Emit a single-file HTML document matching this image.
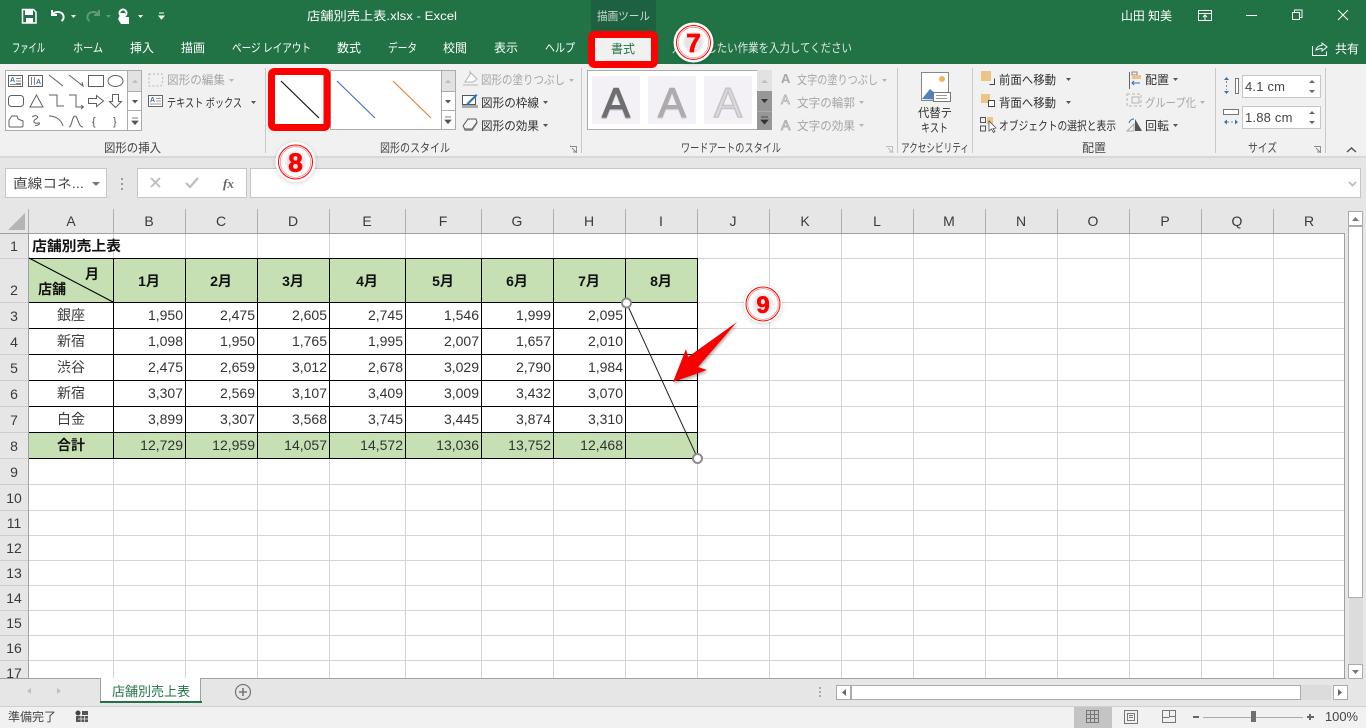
<!DOCTYPE html>
<html lang="ja"><head><meta charset="utf-8"><title>店舗別売上表.xlsx - Excel</title>
<style>
html,body{margin:0;padding:0;width:1366px;height:728px;overflow:hidden;background:#fff}
svg{display:block;font-family:"Liberation Sans","Noto Sans CJK JP",sans-serif;white-space:pre}
.t{font-size:12px;fill:#303030}
.g{font-size:12px;fill:#a6a6a6}
.w{font-size:12px;fill:#fff}
.l{font-size:12px;fill:#444}
.c{font-size:14px;fill:#3a3a3a}
.n{font-size:14px;fill:#333;text-anchor:end}
.b{font-size:14px;fill:#111;font-weight:bold;text-anchor:middle}
.m{text-anchor:middle}
.h{font-size:14px;fill:#3a3a3a;text-anchor:middle}
</style></head><body>
<svg width="1366" height="728" viewBox="0 0 1366 728" xmlns="http://www.w3.org/2000/svg">
<defs>
<filter id="sh" x="-40%" y="-40%" width="180%" height="180%"><feDropShadow dx="0" dy="1" stdDeviation="2.500" flood-color="#000" flood-opacity=".18"/></filter>
<filter id="sb" x="-30%" y="-30%" width="160%" height="160%"><feGaussianBlur stdDeviation="1.200"/></filter>
<filter id="sa" x="-30%" y="-30%" width="160%" height="160%"><feGaussianBlur stdDeviation=".6"/></filter>
</defs>
<!-- title bar -->
<rect width="1366" height="64" fill="#217346"/>
<rect x="591" y="0" width="65" height="32" fill="#1e6140"/>
<!-- QAT -->
<path d="M22.500 9.500h11l2.500 2.500v11h-13.500z" fill="none" stroke="#fff" stroke-width="1.500"/><rect x="25" y="10" width="8" height="5" fill="#fff"/><rect x="26" y="18" width="7" height="5" fill="#fff"/>
<path d="M52 10v5h5M52.500 14.500c3-4 10-3 11 1.500.4 2-.5 4-2 5" fill="none" stroke="#fff" stroke-width="2"/>
<path d="M71 15h5l-2.500 3z" fill="#fff"/>
<path d="M99 10v5h-5M98.500 14.500c-3-4-10-3-11 1.500-.4 2 .5 4 2 5" fill="none" stroke="#5f9a7b" stroke-width="2"/>
<path d="M106 15h5l-2.500 3z" fill="#5f9a7b"/>
<circle cx="123" cy="13" r="3.500" fill="none" stroke="#fff" stroke-width="2"/><path d="M121 13h4v4h4v7h-8l-3-5z" fill="#fff"/>
<path d="M138 15h5l-2.500 3z" fill="#fff"/>
<path d="M159 13h5M159 16h5l-2.500 3z" stroke="#fff" stroke-width="1" fill="#fff"/>
<text x="307" y="20" class="w" textLength="150" lengthAdjust="spacingAndGlyphs">店舗別売上表.xlsx  -  Excel</text>
<text x="597" y="20" font-size="11.500" fill="#c8dbcf" textLength="53" lengthAdjust="spacingAndGlyphs">描画ツール</text>
<text x="1121" y="20" class="w" textLength="51" lengthAdjust="spacingAndGlyphs">山田 知美</text>
<!-- window controls -->
<path d="M1198.500 10.500h13v10h-13zM1198.500 13.500h13M1205 20v-5M1203 17l2-2 2 2" fill="none" stroke="#fff"/>
<path d="M1246 15.500h11" stroke="#fff"/>
<path d="M1292.500 12.500h7v7h-7zM1294.500 12v-2h7.500v7.500h-2" fill="none" stroke="#fff"/>
<path d="M1338 10l10 10M1348 10l-10 10" stroke="#fff"/>
<!-- tabs -->
<g class="w">
<text x="12" y="52" textLength="33" lengthAdjust="spacingAndGlyphs">ファイル</text>
<text x="73" y="52" textLength="30" lengthAdjust="spacingAndGlyphs">ホーム</text>
<text x="130" y="52" textLength="24" lengthAdjust="spacingAndGlyphs">挿入</text>
<text x="181" y="52" textLength="24" lengthAdjust="spacingAndGlyphs">描画</text>
<text x="232" y="52" textLength="79" lengthAdjust="spacingAndGlyphs">ページ レイアウト</text>
<text x="337" y="52" textLength="24" lengthAdjust="spacingAndGlyphs">数式</text>
<text x="388" y="52" textLength="29" lengthAdjust="spacingAndGlyphs">データ</text>
<text x="443" y="52" textLength="24" lengthAdjust="spacingAndGlyphs">校閲</text>
<text x="494" y="52" textLength="24" lengthAdjust="spacingAndGlyphs">表示</text>
<text x="545" y="52" textLength="30" lengthAdjust="spacingAndGlyphs">ヘルプ</text>
</g>
<text x="672" y="52" class="w" textLength="180" lengthAdjust="spacingAndGlyphs" style="fill:#dce9e1">入 実行したい作業を入力してください</text>
<path d="M1312.500 46v9.500h14v-4M1316 50c.5-3 3-4.500 6-4.500v-2.500l5 4-5 4v-2.500c-2.500 0-4 .5-6 1.500z" fill="none" stroke="#fff"/>
<text x="1335" y="53" class="w" textLength="24" lengthAdjust="spacingAndGlyphs">共有</text>
<!-- ribbon -->
<rect y="64" width="1366" height="93" fill="#f1f1f1"/>
<rect y="156" width="1366" height="2" fill="#d8d8d8"/>
<rect x="595" y="37" width="57" height="27" fill="#f1f1f1"/>
<text x="611" y="53" class="t" textLength="24" lengthAdjust="spacingAndGlyphs" style="fill:#217346">書式</text>
<g stroke="#c8c8c8"><path d="M265.500 68v85M581.500 68v85M897.500 68v85M972.500 68v85M1215.500 68v85M1325.500 68v85"/></g>
<!-- shape gallery -->
<rect x="5.500" y="70.500" width="136" height="60" fill="#fff" stroke="#ababab"/>
<rect x="128" y="71" width="13" height="20" fill="#e2e2e2"/>
<path d="M127.500 70v61M128 91.500h13M128 110.500h13" stroke="#ababab" fill="none"/>
<path d="M132 83l3-3.500 3 3.500z" fill="#c0c0c0"/><path d="M132 100h6l-3 3.500z" fill="#555"/><path d="M132 118h6M132 121h6l-3 3.500z" stroke="#555" stroke-width=".8" fill="#555"/>
<g fill="none" stroke="#606060">
<path d="M8.500 75.500h14v11h-14zM28.500 75.500h14v11h-14z"/>
<path d="M16 78.500h5M16 81h5M16 83.500h5M10 84.500h11" stroke-width=".8"/>
<path d="M31.500 77v8M34.500 77v8" stroke-width=".8"/>
<path d="M49 75l14 11M69 75l14 11M80 84l3 2-1-4"/>
<rect x="88.500" y="75.500" width="15" height="11"/><ellipse cx="115.500" cy="81" rx="7.500" ry="5.500"/>
<rect x="8.500" y="95.500" width="15" height="11" rx="3"/><path d="M30 107l6.500-12 6.500 12z"/>
<path d="M49 95h8v11h7M69 95h7v12h7M81 105l2.500 2-2.500 2"/>
<path d="M88.500 98.500h8v-3l7 5.500-7 5.500v-3h-8z"/><path d="M112.500 94.500h6v7h3l-6 6-6-6h3z"/>
<path d="M9 126v-6l3-4h5l1 3 5 2v5l-1 1h-12z"/><path d="M32 117c4-3 8 0 4 2s-2 5 2 4-1 4-3 2"/>
<path d="M49 116c6 0 12 3 14 10"/><path d="M69 127c3 0 3-11 6-11s3 11 8 11"/>
</g>
<text x="92" y="125" font-size="11" fill="#555">{</text><text x="113" y="125" font-size="11" fill="#555">}</text>
<text x="10" y="82" font-size="7" fill="#3f6fb5" font-weight="bold">A</text><text x="36" y="84" font-size="7" fill="#3f6fb5" font-weight="bold">A</text>
<!-- shape edit -->
<path d="M149 74h13l1 6-2 6h-12z" fill="none" stroke="#b5b5b5" stroke-dasharray="2 2"/>
<text x="167" y="84" class="g" textLength="58" lengthAdjust="spacingAndGlyphs">図形の編集</text><path d="M229 79h5l-2.500 3z" fill="#b5b5b5"/>
<rect x="148.500" y="95.500" width="14" height="11" fill="#fff" stroke="#666"/><text x="150" y="102" font-size="7" fill="#3f6fb5" font-weight="bold">A</text><path d="M156 98.500h5M156 101h5M150 104h11" stroke="#777" stroke-width=".8"/>
<text x="167" y="107" class="t" textLength="75" lengthAdjust="spacingAndGlyphs">テキスト ボックス</text><path d="M251 101h5l-2.500 3z" fill="#555"/>
<text x="104" y="152" class="l" textLength="57" lengthAdjust="spacingAndGlyphs">図形の挿入</text>
<!-- line style gallery -->
<rect x="330.500" y="70.500" width="125" height="59" fill="#fff" stroke="#ababab"/>
<rect x="442" y="71" width="13" height="20" fill="#e2e2e2"/>
<path d="M441.500 70v60M442 91.500h13M442 110.500h13" stroke="#ababab" fill="none"/>
<path d="M445 83l3-3.500 3 3.500z" fill="#c0c0c0"/><path d="M445 100h6l-3 3.500z" fill="#555"/><path d="M445 117h6M445 120h6l-3 3.500z" stroke="#555" stroke-width=".8" fill="#555"/>
<rect x="275" y="75" width="50" height="50" fill="#fff"/>
<path d="M281 81l38 37" stroke="#111" stroke-width="1.200"/>
<path d="M337 81l38 37" stroke="#4472c4" stroke-width="1.200"/>
<path d="M393 81l38 37" stroke="#ed7d31" stroke-width="1.200"/>
<rect x="271.500" y="71.500" width="55.500" height="56" rx="3" fill="none" stroke="#fe0000" stroke-width="7"/>
<path d="M465 82l6-9 6 6-4 3zM463 85h15" fill="#fff" stroke="#b5b5b5"/><path d="M470 70.500v4" stroke="#b5b5b5"/>
<text x="481" y="84" class="g" textLength="84" lengthAdjust="spacingAndGlyphs">図形の塗りつぶし</text><path d="M569 79h5l-2.500 3z" fill="#b5b5b5"/>
<path d="M462.500 95.500h13v9h-13z" fill="#fff" stroke="#555"/><rect x="462" y="105" width="16" height="3" fill="#aaa"/><path d="M467 103l9-9 1.500 1.500-9 9-2 .5z" fill="#2f75b5"/>
<text x="481" y="107" class="t" textLength="58" lengthAdjust="spacingAndGlyphs">図形の枠線</text><path d="M543 101h5l-2.500 3z" fill="#555"/>
<path d="M463.500 127l5-7.500h8l1 3-5 7.500h-8z" fill="#999" transform="translate(0 1)"/><path d="M463 126l5-7h8l1 3-5 7h-7z" fill="#f5f5f5" stroke="#555"/>
<text x="481" y="130" class="t" textLength="58" lengthAdjust="spacingAndGlyphs">図形の効果</text><path d="M543 124h5l-2.500 3z" fill="#555"/>
<text x="380" y="152" class="l" textLength="70" lengthAdjust="spacingAndGlyphs">図形のスタイル</text>
<!-- word art -->
<rect x="587.500" y="70.500" width="170" height="59" fill="#fff" stroke="#ababab"/>
<rect x="592" y="76" width="48" height="48" fill="#f4f1f6"/><rect x="648" y="76" width="48" height="48" fill="#f4f1f6"/><rect x="704" y="76" width="48" height="48" fill="#f4f1f6"/>
<text x="616" y="118" class="m" fill="#999" stroke="#999" stroke-width="1" filter="url(#sa)" style="font-size:42px">A</text>
<text x="616" y="117" class="m" fill="#6e6e6e" stroke="#6e6e6e" stroke-width="1" style="font-size:42px">A</text>
<text x="672" y="118" class="m" fill="#ccc" stroke="#ccc" stroke-width="1" filter="url(#sa)" style="font-size:42px">A</text>
<text x="672" y="117" class="m" fill="#acacac" stroke="#acacac" stroke-width="1" style="font-size:42px">A</text>
<text x="728" y="117" class="m" fill="#dbd8df" stroke="#c4c4c4" stroke-width="1.500" style="font-size:42px">A</text>
<rect x="757" y="70" width="15" height="21" fill="#e2e2e2"/><rect x="757" y="91" width="15" height="39" fill="#979797"/>
<path d="M761 83l3.500-3.500 3.500 3.500z" fill="#c0c0c0"/><path d="M761 99h7l-3.500 4z" fill="#333"/><path d="M761 117h7M761 120h7l-3.500 4z" stroke="#333" stroke-width=".8" fill="#333"/><path d="M757 111.500h15" stroke="#ababab"/>
<text x="781" y="83" font-size="13" font-weight="bold" fill="#a6a6a6">A</text>
<text x="781" y="104" font-size="13" fill="#fff" stroke="#a6a6a6" stroke-width=".7">A</text>
<text x="781" y="130" font-size="14" fill="#eee" stroke="#a6a6a6" stroke-width=".8">A</text>
<text x="797" y="84" class="g" textLength="81" lengthAdjust="spacingAndGlyphs">文字の塗りつぶし</text><path d="M882 79h5l-2.500 3z" fill="#b5b5b5"/>
<text x="797" y="107" class="g" textLength="58" lengthAdjust="spacingAndGlyphs">文字の輪郭</text><path d="M859 101h5l-2.500 3z" fill="#b5b5b5"/>
<text x="797" y="130" class="g" textLength="58" lengthAdjust="spacingAndGlyphs">文字の効果</text><path d="M859 124h5l-2.500 3z" fill="#b5b5b5"/>
<text x="681" y="152" class="l" textLength="100" lengthAdjust="spacingAndGlyphs">ワードアートのスタイル</text>
<path d="M576.500 153v-6.500h-6.500M570.500 146.500v-1M572 148l4 4M573 152h3.500v-3.500" fill="none" stroke="#888" stroke-width=".9"/>
<path d="M892.500 153v-6.500h-6.500M888 148l4 4M889 152h3.500v-3.500" fill="none" stroke="#bbb" stroke-width=".9"/>
<path d="M1320.500 153v-6.500h-6.500M1316 148l4 4M1317 152h3.500v-3.500" fill="none" stroke="#888" stroke-width=".9"/>
<!-- alt text -->
<rect x="921.500" y="72.500" width="27" height="28" fill="#fff" stroke="#888"/>
<circle cx="942" cy="79" r="3" fill="#ecb55f"/><path d="M922 99l8-10 6 5 3-2 8 8z" fill="#4f81bd"/>
<rect x="933.500" y="92.500" width="17" height="9" fill="#fff" stroke="#777"/><path d="M936 95.500h11M936 98.500h11" stroke="#999"/>
<text x="918" y="117" class="t" textLength="34" lengthAdjust="spacingAndGlyphs">代替テ</text><text x="921" y="132" class="t" textLength="27" lengthAdjust="spacingAndGlyphs">キスト</text>
<text x="901" y="152" class="l" textLength="68" lengthAdjust="spacingAndGlyphs">アクセシビリティ</text>
<!-- arrange -->
<rect x="981" y="71" width="10" height="10" fill="#ecc488"/><path d="M994.500 78.500v6h-5" fill="none" stroke="#444"/>
<text x="999" y="84" class="t" textLength="57" lengthAdjust="spacingAndGlyphs">前面へ移動</text><path d="M1066 78h5l-2.500 3z" fill="#555"/>
<rect x="981" y="94" width="9" height="9" fill="#ecc488"/><rect x="988.500" y="100.500" width="6" height="6" fill="#fff" stroke="#444"/>
<text x="999" y="107" class="t" textLength="57" lengthAdjust="spacingAndGlyphs">背面へ移動</text><path d="M1066 101h5l-2.500 3z" fill="#555"/>
<path d="M980.500 117.500h5v5h-5zM980.500 126h5v5h-5z" fill="none" stroke="#555"/><rect x="987" y="117" width="6" height="7" fill="#ecc488"/><path d="M989 121v10l2.500-2 2 3.500 1.500-1-2-3 3-.5z" fill="#fff" stroke="#555" stroke-width=".8"/>
<text x="999" y="130" class="t" textLength="117" lengthAdjust="spacingAndGlyphs">オブジェクトの選択と表示</text>
<path d="M1129.500 72v17" stroke="#666"/><rect x="1132" y="72" width="5" height="3" fill="none" stroke="#888"/><rect x="1132" y="75" width="9" height="4" fill="#ecc488"/><path d="M1140 83h-8M1134 81l-2 2 2 2" fill="none" stroke="#2f75b5"/>
<text x="1145" y="84" class="t" textLength="24" lengthAdjust="spacingAndGlyphs">配置</text><path d="M1173 78h5l-2.500 3z" fill="#555"/>
<rect x="1127" y="94" width="14" height="12" fill="none" stroke="#b5b5b5" stroke-dasharray="3 2"/><rect x="1132" y="97" width="7" height="6" fill="none" stroke="#b5b5b5"/>
<text x="1145" y="107" class="g" textLength="51" lengthAdjust="spacingAndGlyphs">グループ化</text><path d="M1200 101h5l-2.500 3z" fill="#b5b5b5"/>
<path d="M1127 131l7-7v7z" fill="none" stroke="#aaa"/><path d="M1135 131v-12l7 12z" fill="#555"/><path d="M1129 123c1-3 3-4 5-4" fill="none" stroke="#2f75b5"/>
<text x="1145" y="130" class="t" textLength="24" lengthAdjust="spacingAndGlyphs">回転</text><path d="M1173 124h5l-2.500 3z" fill="#555"/>
<text x="1082" y="152" class="l" textLength="24" lengthAdjust="spacingAndGlyphs">配置</text>
<!-- size -->
<rect x="1235.500" y="78.500" width="3" height="15" fill="#fff" stroke="#777"/><path d="M1224 80l2.500-3 2.500 3zM1224 91l2.500 3 2.500-3z" fill="#2f75b5"/><path d="M1226.500 81v9" stroke="#888" stroke-dasharray="2 2"/>
<rect x="1242.500" y="75.500" width="78" height="22" fill="#fff" stroke="#c6c6c6"/>
<text x="1245" y="91" font-size="13" fill="#444" letter-spacing=".2">4.1 cm</text>
<path d="M1309 83l3-3 3 3zM1309 90h6l-3 3z" fill="#666"/>
<rect x="1223.500" y="109.500" width="15" height="5" fill="#fff" stroke="#777"/><path d="M1224 122l3-2.500v5zM1238 122l-3-2.500v5z" fill="#2f75b5"/><path d="M1227 122h8" stroke="#888" stroke-dasharray="2 2"/>
<rect x="1242.500" y="106.500" width="78" height="22" fill="#fff" stroke="#c6c6c6"/>
<text x="1245" y="122" font-size="13" fill="#444" letter-spacing=".2">1.88 cm</text>
<path d="M1309 114l3-3 3 3zM1309 121h6l-3 3z" fill="#666"/>
<text x="1248" y="152" class="l" textLength="29" lengthAdjust="spacingAndGlyphs">サイズ</text>
<path d="M1347 152l4.500-4 4.500 4" fill="none" stroke="#555" stroke-width="1.500"/>
<!-- formula bar -->
<rect y="158" width="1366" height="75" fill="#e6e6e6"/>
<rect x="5.500" y="168.500" width="101" height="29" fill="#fff" stroke="#c6c6c6"/>
<text x="13" y="188" font-size="13" fill="#444" textLength="71" lengthAdjust="spacingAndGlyphs">直線コネ...</text>
<path d="M92 182h8l-4 4z" fill="#777"/>
<path d="M122 178v2M122 183v2M122 188v2" stroke="#999" stroke-width="2"/>
<rect x="137.500" y="168.500" width="109" height="29" fill="#fff" stroke="#c6c6c6"/>
<path d="M151 178l9 9M160 178l-9 9" stroke="#bdbdbd" stroke-width="1.800"/>
<path d="M186 183l4 4 8-9" fill="none" stroke="#bdbdbd" stroke-width="2.200"/>
<text x="223" y="188" font-family="Liberation Serif" font-style="italic" font-weight="bold" font-size="13" fill="#666">fx</text>
<rect x="250.500" y="168.500" width="1110" height="29" fill="#fff" stroke="#c6c6c6"/>
<path d="M1349 182l3.500 3.500 3.500-3.500" fill="none" stroke="#bbb" stroke-width="1.800"/>
<!-- sheet -->
<rect x="0" y="209" width="1348" height="470" fill="#e6e6e6"/>
<rect x="29" y="234" width="1316" height="445" fill="#fff"/>
<path d="M8 230l17-17v17z" fill="#b5b5b5"/>
<g stroke="#b0b0b0"><path d="M28.500 209v24M113.500 209v24M185.500 209v24M257.500 209v24M329.500 209v24M405.500 209v24M481.500 209v24M553.500 209v24M625.500 209v24M697.500 209v24M769.500 209v24M841.500 209v24M913.500 209v24M985.500 209v24M1057.500 209v24M1129.500 209v24M1201.500 209v24M1273.500 209v24"/></g>
<g stroke="#d4d4d4"><path d="M113.500 234v444M185.500 234v444M257.500 234v444M329.500 234v444M405.500 234v444M481.500 234v444M553.500 234v444M625.500 234v444M697.500 234v444M769.500 234v444M841.500 234v444M913.500 234v444M985.500 234v444M1057.500 234v444M1129.500 234v444M1201.500 234v444M1273.500 234v444"/>
<path d="M29 258.500h1316M29 302.500h1316M29 328.500h1316M29 354.500h1316M29 380.500h1316M29 406.500h1316M29 432.500h1316M29 458.500h1316M29 484.500h1316M29 510.500h1316M29 535.500h1316M29 560.500h1316M29 585.500h1316M29 610.500h1316M29 635.500h1316M29 660.500h1316"/></g>
<path d="M0 233.500h1345M28.500 233v445M1344.500 233v445" stroke="#a0a0a0" fill="none"/>
<g stroke="#c0c0c0"><path d="M0 258.500h28M0 302.500h28M0 328.500h28M0 354.500h28M0 380.500h28M0 406.500h28M0 432.500h28M0 458.500h28M0 484.500h28M0 510.500h28M0 535.500h28M0 560.500h28M0 585.500h28M0 610.500h28M0 635.500h28M0 660.500h28" stroke-opacity=".7"/></g>
<g class="h">
<text x="71" y="226">A</text><text x="149" y="226">B</text><text x="221" y="226">C</text><text x="293" y="226">D</text><text x="367" y="226">E</text><text x="443" y="226">F</text><text x="517" y="226">G</text><text x="589" y="226">H</text><text x="661" y="226">I</text><text x="733" y="226">J</text><text x="805" y="226">K</text><text x="877" y="226">L</text><text x="949" y="226">M</text><text x="1021" y="226">N</text><text x="1093" y="226">O</text><text x="1165" y="226">P</text><text x="1237" y="226">Q</text><text x="1309" y="226">R</text>
<text x="14" y="251">1</text><text x="14" y="295">2</text><text x="14" y="321">3</text><text x="14" y="347">4</text><text x="14" y="373">5</text><text x="14" y="399">6</text><text x="14" y="425">7</text><text x="14" y="451">8</text><text x="14" y="477">9</text><text x="14" y="503">10</text><text x="14" y="528">11</text><text x="14" y="553">12</text><text x="14" y="578">13</text><text x="14" y="603">14</text><text x="14" y="628">15</text><text x="14" y="653">16</text><text x="14" y="678">17</text>
</g>
<rect x="29" y="259" width="668" height="43" fill="#c6e0b4"/>
<rect x="29" y="433" width="668" height="25" fill="#c6e0b4"/>
<g stroke="#000" fill="none">
<path d="M29 258.500h669M29 302.500h669M29 328.500h669M29 354.500h669M29 380.500h669M29 406.500h669M29 432.500h669M29 458.500h669"/>
<path d="M113.500 258v201M185.500 258v201M257.500 258v201M329.500 258v201M405.500 258v201M481.500 258v201M553.500 258v201M625.500 258v201M697.500 258v201"/>
<path d="M29 258l84 44"/>
</g>
<text x="32" y="251" class="b" style="text-anchor:start" textLength="89" lengthAdjust="spacingAndGlyphs">店舗別売上表</text>
<text x="85" y="279" class="b" style="text-anchor:start">月</text>
<text x="38" y="294" class="b" style="text-anchor:start">店舗</text>
<g class="b"><text x="149" y="286">1月</text><text x="221" y="286">2月</text><text x="293" y="286">3月</text><text x="367" y="286">4月</text><text x="443" y="286">5月</text><text x="517" y="286">6月</text><text x="589" y="286">7月</text><text x="661" y="286">8月</text></g>
<g class="c" text-anchor="middle"><text x="71" y="320">銀座</text><text x="71" y="346">新宿</text><text x="71" y="372">渋谷</text><text x="71" y="398">新宿</text><text x="71" y="424">白金</text></g>
<text x="71" y="450" class="b">合計</text>
<g class="n">
<text x="183" y="320">1,950</text><text x="255" y="320">2,475</text><text x="327" y="320">2,605</text><text x="403" y="320">2,745</text><text x="479" y="320">1,546</text><text x="551" y="320">1,999</text><text x="623" y="320">2,095</text>
<text x="183" y="346">1,098</text><text x="255" y="346">1,950</text><text x="327" y="346">1,765</text><text x="403" y="346">1,995</text><text x="479" y="346">2,007</text><text x="551" y="346">1,657</text><text x="623" y="346">2,010</text>
<text x="183" y="372">2,475</text><text x="255" y="372">2,659</text><text x="327" y="372">3,012</text><text x="403" y="372">2,678</text><text x="479" y="372">3,029</text><text x="551" y="372">2,790</text><text x="623" y="372">1,984</text>
<text x="183" y="398">3,307</text><text x="255" y="398">2,569</text><text x="327" y="398">3,107</text><text x="403" y="398">3,409</text><text x="479" y="398">3,009</text><text x="551" y="398">3,432</text><text x="623" y="398">3,070</text>
<text x="183" y="424">3,899</text><text x="255" y="424">3,307</text><text x="327" y="424">3,568</text><text x="403" y="424">3,745</text><text x="479" y="424">3,445</text><text x="551" y="424">3,874</text><text x="623" y="424">3,310</text>
<text x="183" y="450">12,729</text><text x="255" y="450">12,959</text><text x="327" y="450">14,057</text><text x="403" y="450">14,572</text><text x="479" y="450">13,036</text><text x="551" y="450">13,752</text><text x="623" y="450">12,468</text>
</g>
<!-- connector -->
<path d="M626.500 303l71 155" stroke="#222" stroke-width="1"/>
<circle cx="626.500" cy="303" r="4.500" fill="#fff" stroke="#8c8c8c" stroke-width="2"/>
<circle cx="697.500" cy="458.500" r="4.500" fill="#fff" stroke="#8c8c8c" stroke-width="2"/>
<!-- vertical scrollbar -->
<rect x="1345" y="209" width="21" height="470" fill="#e6e6e6"/>
<rect x="1348.500" y="211.500" width="14" height="14" fill="#fff" stroke="#ababab"/><path d="M1352 221l3.500-4 3.500 4z" fill="#777"/>
<rect x="1348.500" y="226.500" width="14" height="371" fill="#fff" stroke="#ababab"/>
<rect x="1349" y="598" width="14" height="66" fill="#dcdcdc"/>
<rect x="1348.500" y="664.500" width="14" height="14" fill="#fff" stroke="#ababab"/><path d="M1352 670h7l-3.500 4z" fill="#777"/>
<!-- tab strip -->
<rect y="679" width="1366" height="27" fill="#e6e6e6"/>
<path d="M0 678.500h100M201 678.500h1145" stroke="#a0a0a0"/>
<path d="M100.500 678v24M200.500 678v24" stroke="#a0a0a0"/>
<rect x="101" y="679" width="99" height="23" fill="#fff"/>
<rect x="100" y="701" width="102" height="2" fill="#217346"/>
<text x="112" y="696" font-size="13" fill="#217346" textLength="78" lengthAdjust="spacingAndGlyphs">店舗別売上表</text>
<path d="M31 688l-4 3 4 3zM57 688l4 3-4 3z" fill="#c0c0c0"/>
<circle cx="243" cy="692" r="7.500" fill="none" stroke="#777" stroke-width="1.200"/><path d="M243 688v8M239 692h8" stroke="#777" stroke-width="1.600"/>
<path d="M820 687v2M820 691v2M820 695v2" stroke="#aaa" stroke-width="2"/>
<rect x="836.500" y="685.500" width="14" height="14" fill="#fff" stroke="#ababab"/><path d="M846 689l-4 3.500 4 3.500z" fill="#666"/>
<rect x="851.500" y="685.500" width="449" height="14" fill="#fff" stroke="#ababab"/>
<rect x="1301" y="685" width="30" height="15" fill="#dcdcdc"/>
<rect x="1333.500" y="685.500" width="14" height="14" fill="#fff" stroke="#ababab"/><path d="M1338 689l4 3.500-4 3.500z" fill="#666"/>
<!-- status bar -->
<rect y="706" width="1366" height="22" fill="#f1f1f1"/>
<rect y="706" width="1366" height="1" fill="#d0d0d0"/>
<text x="8" y="721" class="t" textLength="48" lengthAdjust="spacingAndGlyphs" style="fill:#444">準備完了</text>
<circle cx="78" cy="713" r="2.500" fill="#444"/><path d="M76 716h12v6h-12zM82 711h6v4h-6z" fill="#555"/><path d="M78 719h10M81 716v6M84.500 716v6" stroke="#eee" stroke-width=".7"/>
<rect x="1074" y="707" width="38" height="21" fill="#c4c4c4"/>
<path d="M1086.500 710.500h12v12h-12zM1086.500 714.500h12M1086.500 718.500h12M1090.500 710.500v12M1094.500 710.500v12" fill="none" stroke="#777"/>
<path d="M1124.500 710.500h13v13h-13zM1127.500 713.500h7v7h-7zM1129 715.500h4M1129 717.500h4" fill="none" stroke="#777"/>
<path d="M1162.500 710.500h13v12h-13zM1169.500 710.500v6h6M1162.500 717.500h7" fill="none" stroke="#777"/>
<rect x="1193" y="716" width="6" height="2" fill="#666"/>
<rect x="1203" y="717" width="100" height="1" fill="#aaa"/>
<rect x="1251" y="711" width="5" height="11" fill="#6e6e6e"/>
<path d="M1310 714v6M1307 717h7" stroke="#666" stroke-width="2"/>
<text x="1325" y="721" class="t" textLength="33" lengthAdjust="spacingAndGlyphs" style="fill:#444;font-size:13px">100%</text>
<!-- red contextual highlight -->
<rect x="591.500" y="34.500" width="63" height="30" rx="3" fill="none" stroke="#fe0000" stroke-width="7"/>
<!-- callouts -->
<g filter="url(#sh)"><circle cx="693.500" cy="42.500" r="20" fill="#fff"/></g>
<circle cx="693.500" cy="42.500" r="17" fill="none" stroke="#f00" stroke-width="1"/><circle cx="693.500" cy="42.500" r="15.300" fill="none" stroke="#f66" stroke-width=".6"/>
<circle cx="693.500" cy="42.500" r="10" fill="#e4e4e4" filter="url(#sb)"/>
<text x="693.500" y="52" class="m" fill="#f00" stroke="#f00" stroke-width=".8" style="font-weight:bold;font-size:26px">7</text>
<g filter="url(#sh)"><circle cx="295.500" cy="162" r="20" fill="#fff"/></g>
<circle cx="295.500" cy="162" r="17" fill="none" stroke="#f00" stroke-width="1"/><circle cx="295.500" cy="162" r="15.300" fill="none" stroke="#f66" stroke-width=".6"/>
<circle cx="295.500" cy="162" r="10" fill="#e4e4e4" filter="url(#sb)"/>
<text x="295.500" y="171.500" class="m" fill="#f00" stroke="#f00" stroke-width=".8" style="font-weight:bold;font-size:26px">8</text>
<g filter="url(#sh)"><circle cx="763" cy="304" r="19" fill="#fff"/></g>
<circle cx="763" cy="304" r="17" fill="none" stroke="#f00" stroke-width="1"/><circle cx="763" cy="304" r="15.300" fill="none" stroke="#f66" stroke-width=".6"/>
<circle cx="763" cy="304" r="10" fill="#e4e4e4" filter="url(#sb)"/>
<text x="763" y="313" class="m" fill="#f00" stroke="#f00" stroke-width=".6" style="font-weight:bold;font-size:24px">9</text>
<!-- red arrow -->
<path d="M737 322L688 357 686 349 673 382 707 370 698 367z" fill="#000" opacity=".3" filter="url(#sb)" transform="translate(1 2)"/>
<path d="M737 322L688 357 686 349 673 382 707 370 698 367z" fill="#f60000"/>
</svg>
</body></html>
